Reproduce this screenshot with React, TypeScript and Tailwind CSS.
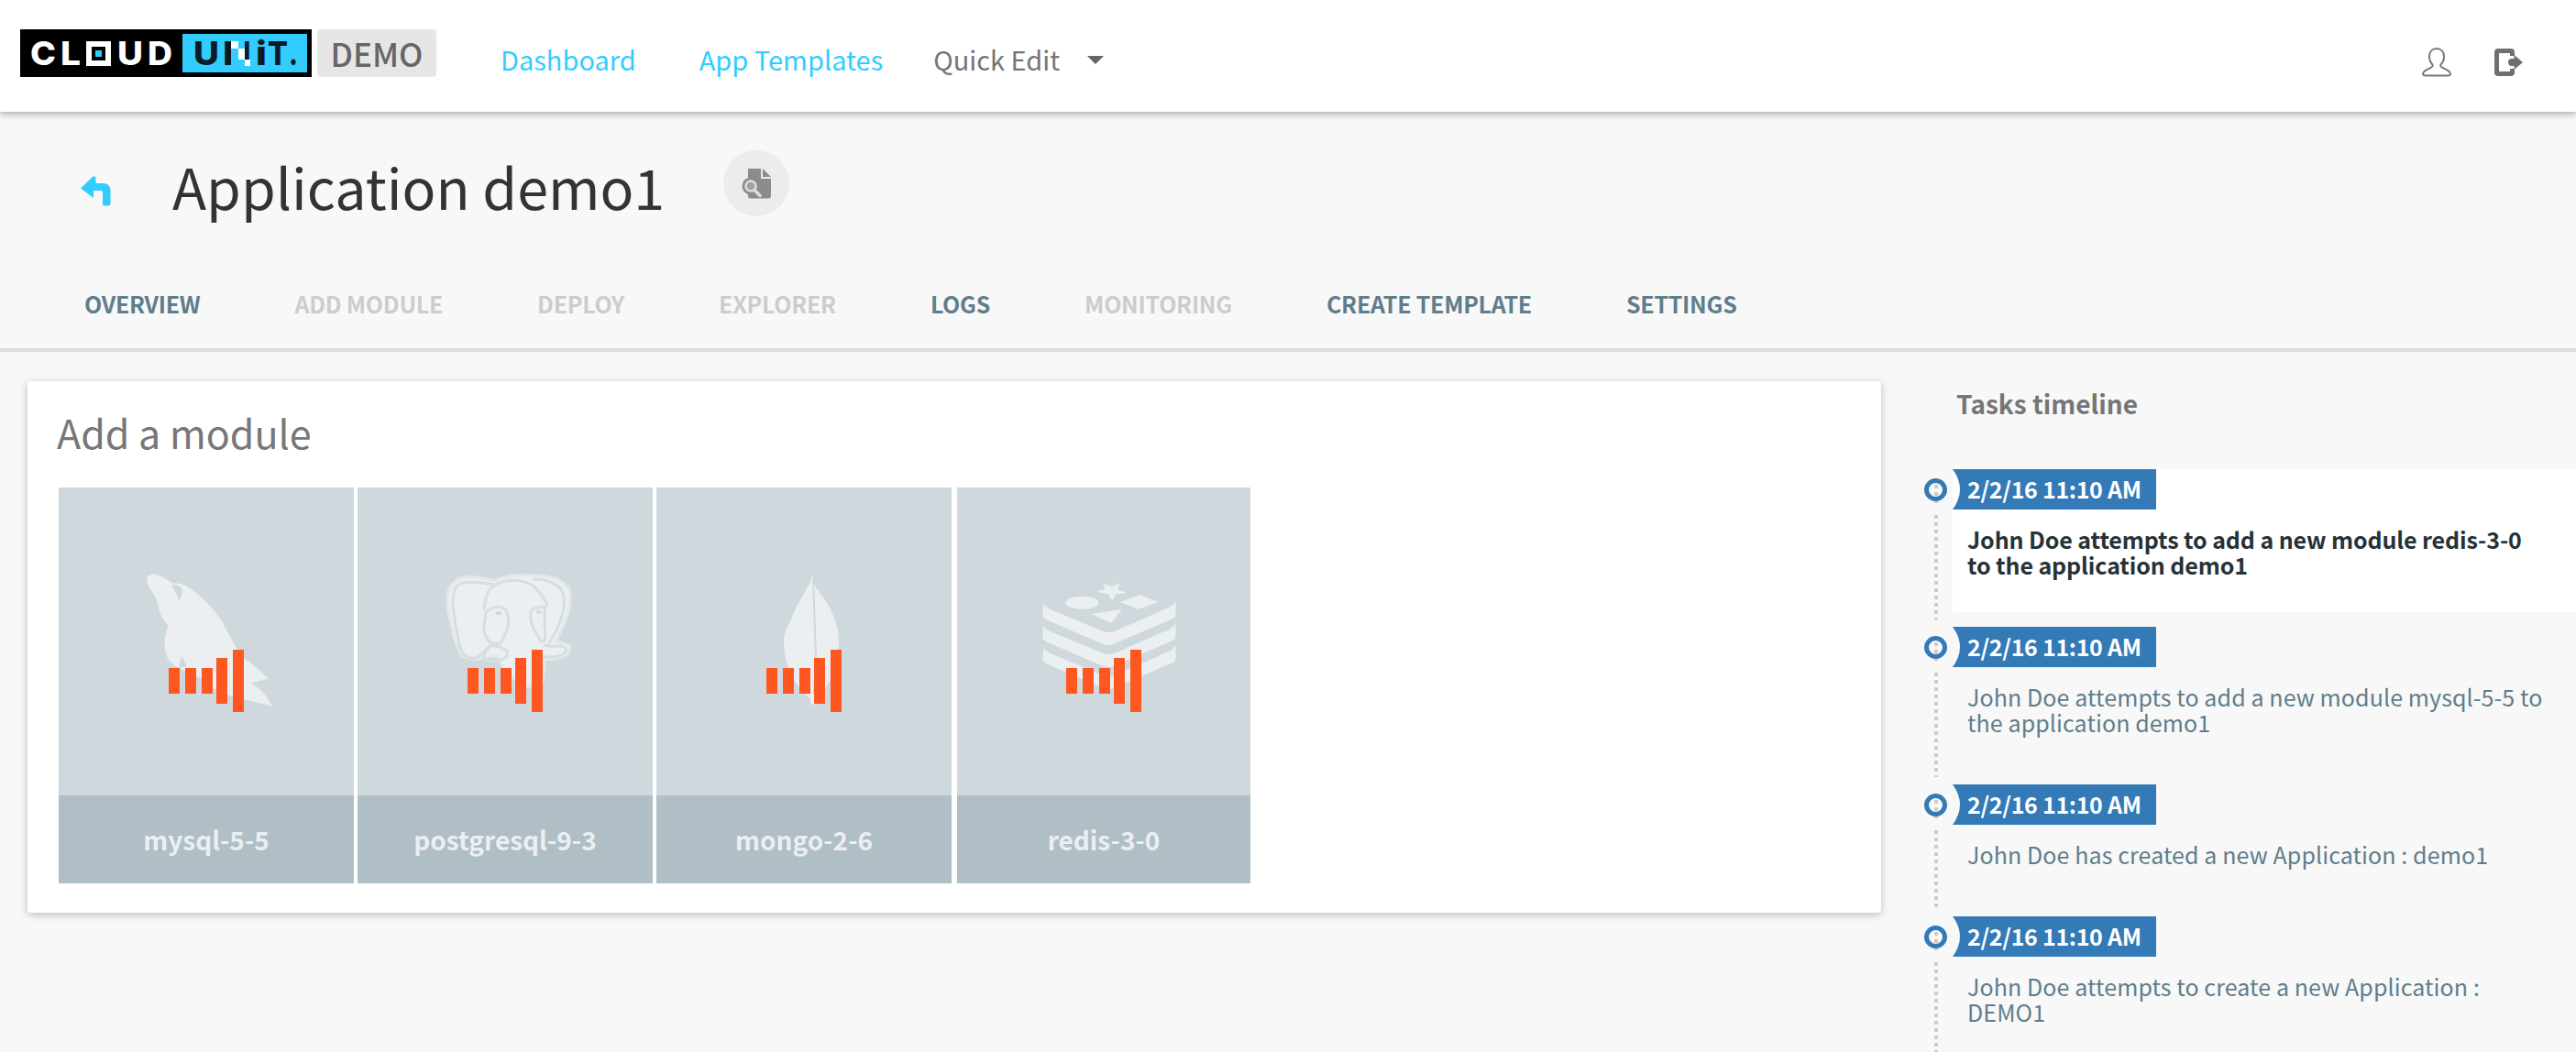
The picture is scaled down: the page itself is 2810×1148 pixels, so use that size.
const sans = 'font-["Noto_Sans_CJK_SC","Source_Sans_Pro","Open_Sans",sans-serif]'

const tabs = [
  { label: 'OVERVIEW', on: true },
  { label: 'ADD MODULE', on: false },
  { label: 'DEPLOY', on: false },
  { label: 'EXPLORER', on: false },
  { label: 'LOGS', on: true },
  { label: 'MONITORING', on: false },
  { label: 'CREATE TEMPLATE', on: true },
  { label: 'SETTINGS', on: true },
]

const tasks = [
  { text: 'John Doe attempts to add a new module redis-3-0 to the application demo1', current: true },
  { text: 'John Doe attempts to add a new module mysql-5-5 to the application demo1', current: false },
  { text: 'John Doe has created a new Application : demo1', current: false },
  { text: 'John Doe attempts to create a new Application : DEMO1', current: false },
]

const Logo = () => {
  return (
    <svg width="318" height="52" viewBox="22 32 318 52" fontFamily="Inter, sans-serif" fontWeight="800" fontSize="36">
      <rect x="22" y="32" width="318" height="52" fill="#000" />
      <rect x="199" y="37" width="136" height="42" fill="#33ccff" />
      <g fill="#fff">
        <text x="33" y="71" textLength="28" lengthAdjust="spacingAndGlyphs">C</text>
        <text x="66" y="71" textLength="22" lengthAdjust="spacingAndGlyphs">L</text>
        <text x="128" y="71" textLength="28" lengthAdjust="spacingAndGlyphs">U</text>
        <text x="161" y="71" textLength="27" lengthAdjust="spacingAndGlyphs">D</text>
      </g>
      <rect x="94" y="45" width="27" height="27" fill="#fff" />
      <rect x="100" y="51" width="15" height="15" fill="#000" />
      <rect x="104" y="55" width="7" height="7" fill="#33ccff" />
      <g fill="#0b1c26">
        <text x="211" y="71" textLength="28" lengthAdjust="spacingAndGlyphs">U</text>
        <text x="243" y="71" textLength="31" lengthAdjust="spacingAndGlyphs">N</text>
        <text x="279" y="71" textLength="12" lengthAdjust="spacingAndGlyphs">i</text>
        <text x="292" y="71" textLength="22" lengthAdjust="spacingAndGlyphs">T</text>
        <text x="315" y="71" textLength="10" lengthAdjust="spacingAndGlyphs">.</text>
      </g>
      <rect x="252" y="44" width="15" height="28" fill="#33ccff" />
      <rect x="252" y="45" width="8" height="8" fill="#fff" />
      <rect x="260" y="53" width="7" height="12" fill="#fff" />
      <rect x="267" y="65" width="6" height="7" fill="#fff" />
    </svg>
  )
}

const UserIcon = () => {
  return (
    <svg width="32" height="32" viewBox="0 0 32 32" fill="none" stroke="#777" strokeWidth="2">
      <path d="M16 1c-5 0-8 3.500-8 8.500 0 4 1.500 7 3.500 9 .8 1-.2 2.500-2 3.300C6 23.300 1 25.500 1 28.500c0 1.500 1.500 2 3 2h24c1.500 0 3-.5 3-2 0-3-5-5.200-8.500-6.700-1.800-.8-2.800-2.300-2-3.300 2-2 3.500-5 3.500-9C24 4.500 21 1 16 1z" />
    </svg>
  )
}

const ExitIcon = () => {
  return (
    <svg width="32" height="32" viewBox="0 0 32 32" fill="#6f6f6f">
      <path d="M5 1h14a4 4 0 0 1 4 4v4h-5V6H6v20h12v-3h5v4a4 4 0 0 1-4 4H5a4 4 0 0 1-4-4V5a4 4 0 0 1 4-4z" />
      <path d="M20 12h2.500V8L32 16l-9.500 8v-4H20a4 4 0 0 1 0-8z" />
    </svg>
  )
}

const BackIcon = () => {
  return (
    <svg width="35" height="33" viewBox="0 0 35 33" fill="#33ccff">
      <path d="M15 0l2.500 1.500V8h8c5 0 8 3 8 8v14.500c0 1.200-.8 2-2 2h-5c-1 0-1.500-.8-1.500-2V18c0-1-.5-2-2-2h-8v6.500L15 24 1 13.500z" />
    </svg>
  )
}

const FileSearchIcon = () => {
  return (
    <svg width="34" height="34" viewBox="0 0 34 34">
      <path d="M8 1h14v11h11v19c0 1.500-1 2.500-2.500 2.500H10.500C9 33.500 8 32.500 8 31z" fill="#8c8c8c" />
      <path d="M24 1l9 9h-9z" fill="#8c8c8c" />
      <circle cx="11" cy="20" r="9.500" fill="#8c8c8c" />
      <circle cx="11" cy="20" r="5.500" fill="#a0a0a0" stroke="#dedede" strokeWidth="2.500" />
      <path d="M15.500 25l5.500 5.500" stroke="#dedede" strokeWidth="3.500" strokeLinecap="round" />
    </svg>
  )
}

const Bars = () => {
  return (
    <g fill="#ff5722">
      <rect x="120" y="197" width="12" height="28" />
      <rect x="138" y="197" width="12" height="28" />
      <rect x="156" y="197" width="12" height="28" />
      <rect x="172" y="186" width="12" height="50" />
      <rect x="190" y="177" width="12" height="68" />
    </g>
  )
}

const Dolphin = () => {
  return (
    <g>
      <path
        d="M96.700 105C95 98 98 94 103.600 94.600 112 96 118 100 124 104.500 130 104.500 134 105 138 107 146 111 154 118 161 124.400 168 132 174 140 179 147 183 156 187 163 191 170 194 177 198 182 202 186 209 191 215 196 220.600 201L228.500 208.600 209 213.600C214 216 219 220 223 224 227 228 230 233 233 238.500 226 237 218 235 211 233 200 231 190 228 184 226 172 222 163 216 156 208.600 140 200 125 198 118.700 185.600 116 180 115 172 116 166.500 116.500 160 118 155 119.600 151 115 146 112 141 110.500 136 108.500 131 108 126 107 122.500 104 116 99 110 96.700 105z"
        fill="#eceff1"
      />
      <path d="M131 197l3-13.300 6 11.300z" fill="#cfd8dc" />
      <path d="M123 107c5-2 10 0 11.500 4 1 4-.5 9-3.500 12-1-6-5-10-8-16z" fill="#cfd8dc" />
    </g>
  )
}

const Elephant = () => {
  return (
    <g fill="none" strokeLinecap="round" strokeLinejoin="round">
      <path
        d="M98 128C98 115 99 108 103.600 105 109 99 114 97 120 97.600 130 97 140 99 149.500 101.400 160 97 175 94 188.500 95.700 203 96 215 98 220.700 101.400 228 106 232 110 232 117 232 126 231 135 227.500 143.500 224 152 220 160 216 168.400 222 169 232 170 232 175 232 180 228 183 225 184 218 187 211 188 204.600 187.600L202 212 184 218 160 200 153 184C145 184 138 186 129 187.600 122 188 115 185 112.800 181.800 107 172 105 163 103.600 155 101 146 99 137 98 128z"
        fill="#eceff1"
        stroke="#e2e7ea"
        strokeWidth="3"
      />
      <g stroke="#d6dee1" strokeWidth="3">
        <path d="M149 106C125 102 114 102 108 108 105 112 104 118 104 128 106 145 109 165 113 178 116 183 122 188 129 186 134 184 140 178 145 172" />
        <path d="M138 132C139 122 141 114 146 109 152 104 158 102 166 101.400 175 101 184 103 191 107 198 113 204 121 207 128" />
        <path d="M193 100C205 100 215 103 222 111 227 118 226 132 222 143 219 153 213 163 209 170" />
        <path d="M140 136C144 132 150 130 154 130 160 131 162 134 163 136 165 142 165 148 164 153 162 160 158 165 156 170 150 171 145 170 142.600 166.500 139 162 137 157 138 151z" />
        <path d="M189.500 134C193 131 199 130 204.600 130 203 142 205 155 204.600 166.500L200 168C197 160 191 155 189.500 147 188.500 142 188.500 138 189.500 134z" />
        <path d="M138 183.700C140 178 143 174 145 172 151 173 158 175 163 178 164 182 163 185 161 186 155 189 148 190 142.600 189.500 139 188.500 137 186 138 183.700z" />
        <path d="M204 172c6 2 14 1 17 1 5 1 8 3 6 6-2 3-8 6-16 6-5 0-8 0-11-1" />
      </g>
      <ellipse cx="154" cy="137" rx="3.500" ry="2" fill="#cfd8dc" />
      <ellipse cx="197.700" cy="136" rx="3" ry="2" fill="#cfd8dc" />
    </g>
  )
}

const Leaf = () => {
  return (
    <g>
      <path
        d="M170 95C169 100 168 104 166 107 160 118 152 130 146 146 141 155 139 160 139 167 139 180 142 192 146 202 152 215 160 224 168 230L168 235C168 237 172 237 175 236 180 226 188 215 192 204 197 192 199 180 199 168 199 155 195 143 189 131 184 121 176 113 171.500 105z"
        fill="#eceff1"
      />
      <path d="M171 100l3 86-2 40" stroke="#cfd8dc" strokeWidth="2" fill="none" />
    </g>
  )
}

const RedisStack = () => {
  return (
    <g fill="#eceff1">
      <path d="M160 105l9.500 3 9.500-4-3 7.500 10 3.500-12 1.500-3.500 7-4.500-7-13-2.500 9.500-3.500z" />
      <ellipse cx="137.500" cy="125.700" rx="18" ry="7" />
      <path d="M200.500 117l19.500 8-21 8-20-8z" />
      <path d="M147 138l33.500-5-11 15z" />
      {[0, 24, 48].map((dy) => (
        <path
          key={dy}
          transform={`translate(0 ${dy})`}
          d="M95 127c1 2 4 4 7.500 6l55.500 23c3 1.500 6 2 9 2s6-1 9-2.500l56-24.500c3-1.500 5-3 7.500-7v15c0 2-2 4-5.500 5l-58 25c-3 1.500-6 3-9 3-3 0-6-1-9-2l-58-25c-3-1.500-5.500-3-5.500-6z"
        />
      ))}
    </g>
  )
}

const Tile = ({ name, icon, className }: { name: string; icon: React.ReactNode; className: string }) => {
  return (
    <div className={`flex flex-col ${className}`}>
      <div className="flex h-[336px] justify-center bg-[#cfd8dc]">
        <svg width="322" height="336" viewBox="0 0 322 336" className="shrink-0">
          {icon}
          <Bars />
        </svg>
      </div>
      <div className="flex h-[96px] items-center justify-center bg-[#b0bec5] text-[28px] font-bold text-[#eceff1]">{name}</div>
    </div>
  )
}

const TimelineItem = ({ text, current }: { text: string; current: boolean }) => {
  return (
    <div className={`relative mb-4 ${current ? 'bg-white' : ''}`}>
      <div className="absolute top-[10px] left-[-31px] z-10 size-[25px] rounded-full border-[5px] border-[#337ab7]" />
      <div className="absolute top-[17px] left-[-20px] h-5 w-1 bg-[repeating-linear-gradient(to_bottom,#cccccc_0,#cccccc_4px,transparent_4px,transparent_8px)]" />
      <div className="absolute top-[50px] bottom-[-8px] left-[-20px] w-1 bg-[repeating-linear-gradient(to_bottom,#cccccc_0,#cccccc_4px,transparent_4px,transparent_8px)]" />
      <div className="flex h-[44px] w-[222px] items-center bg-[#337ab7] pl-4 text-[25px] font-bold tracking-[-0.3px] whitespace-nowrap text-white [clip-path:path('M0_0H222V44H0Q16_22_0_0Z')]">
        2/2/16 11:10 AM
      </div>
      <p
        className={`pt-[18px] pr-[35px] pb-[38px] pl-4 text-[25px] leading-7 ${
          current ? 'font-bold tracking-[-0.1px] text-[#263238]' : 'tracking-[0.1px] text-[#607d8b]'
        }`}
      >
        {text}
      </p>
    </div>
  )
}

export default function App() {
  return (
    <div className={`h-screen overflow-hidden bg-[#f8f8f8] ${sans}`}>
      <header className="relative z-10 flex h-[122px] items-center bg-white pr-[58px] pl-[22px] shadow-[0_2px_8px_rgba(0,0,0,0.35)]">
        <div className="flex gap-1.5 self-start pt-8">
          <Logo />
          <div className="flex h-[52px] w-[130px] items-center justify-center rounded bg-[#e6e6e6] text-[35px] font-medium text-[#666]">DEMO</div>
        </div>
        <nav className="mt-2 ml-[70px] flex items-center text-[29px]">
          <span className="text-[#33ccff]">Dashboard</span>
          <span className="ml-[69px] text-[#33ccff]">App Templates</span>
          <span className="ml-[55px] text-[#757575]">Quick Edit</span>
          <span className="ml-[30px] size-0 border-x-[9px] border-t-[9px] border-x-transparent border-t-[#666]" />
        </nav>
        <div className="mt-[13px] ml-auto flex items-center gap-[46px]">
          <UserIcon />
          <ExitIcon />
        </div>
      </header>

      <div className="flex h-[166px] items-center">
        <div className="mt-1.5 ml-[87px]">
          <BackIcon />
        </div>
        <h1 className="mb-1.5 ml-[66px] text-[61px] leading-none font-normal text-[#333]">Application demo1</h1>
        <div className="mb-2.5 ml-16 flex size-[72px] items-center justify-center rounded-full bg-[#ececec]">
          <FileSearchIcon />
        </div>
      </div>

      <div className="flex h-[96px] items-center gap-[103px] border-b-4 border-[#dddddd] pb-1 pl-[92px] text-[25px] font-bold tracking-[-0.27px]">
        {tabs.map((tab) => (
          <span key={tab.label} className={tab.on ? 'text-[#607d8b]' : 'text-[#cccccc]'}>
            {tab.label}
          </span>
        ))}
      </div>

      <div className="flex">
        <div className="mt-8 ml-[30px] h-[580px] w-[2022px] rounded bg-white px-8 pt-[25px] shadow-[0_2px_8px_rgba(0,0,0,0.25)]">
          <h2 className="text-[43px] leading-[60px] text-[#777]">Add a module</h2>
          <div className="mt-[31px] ml-0.5 flex">
            <Tile name="mysql-5-5" icon={<Dolphin />} className="w-[322px]" />
            <Tile name="postgresql-9-3" icon={<Elephant />} className="ml-1 w-[322px]" />
            <Tile name="mongo-2-6" icon={<Leaf />} className="ml-1 w-[322px]" />
            <Tile name="redis-3-0" icon={<RedisStack />} className="ml-1.5 w-[320px]" />
          </div>
        </div>

        <aside className="flex-1 pt-[38px] pl-[78px]">
          <h3 className="ml-1 text-[28px] leading-[36px] font-bold text-[#757575]">Tasks timeline</h3>
          <div className="mt-[54px]">
            {tasks.map((task) => (
              <TimelineItem key={task.text} text={task.text} current={task.current} />
            ))}
          </div>
        </aside>
      </div>
    </div>
  )
}
